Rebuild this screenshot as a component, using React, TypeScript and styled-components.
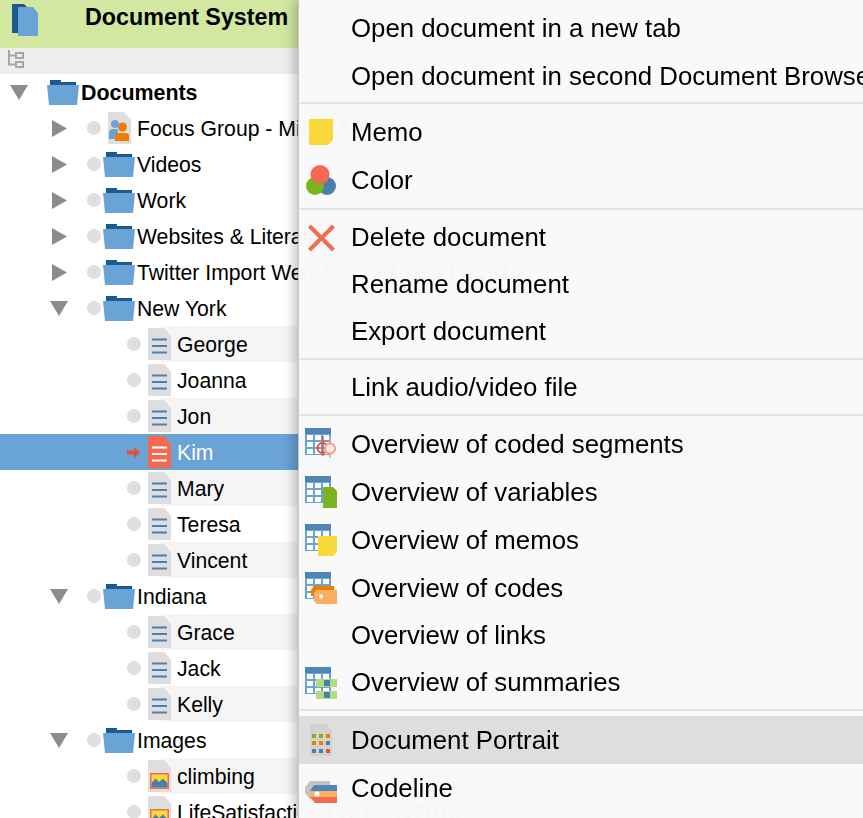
import React from 'react';
import styled, {createGlobalStyle} from 'styled-components';

const BLUE = '#6aa3d5';
const DARK_BLUE = '#1c5a8e';
const MID_BLUE = '#4a80b0';
const RED = '#f4694f';
const GREEN = '#7ab51d';
const YELLOW = '#fcd93a';
const ORANGE = '#f07d00';
const LIGHT_ORANGE = '#fbb061';
const DOC_GREY = '#dedede';

const GlobalStyle = createGlobalStyle`
    html, body {
        margin: 0;
        padding: 0;
        background: #fff;
    }
    body {
        font-family: "Liberation Sans", Arial, sans-serif;
        color: #000;
    }
`;

const Page = styled.div`
    position: relative;
    width: 863px;
    height: 818px;
    overflow: hidden;
    background: #fff;
`;

const Header = styled.div`
    display: flex;
    align-items: flex-start;
    height: 48px;
    width: 300px;
    padding: 4px 0 0 12px;
    box-sizing: border-box;
    background: #d2e8a0;
`;

const Title = styled.h1`
    margin: -5px 0 0 47px;
    font-size: 23.3px;
    line-height: 36px;
    font-weight: bold;
    white-space: nowrap;
`;

const Toolbar = styled.div`
    display: flex;
    align-items: flex-start;
    height: 26px;
    width: 300px;
    padding: 2px 0 0 8px;
    box-sizing: border-box;
    background: #eeeeee;
`;

const Tree = styled.div`
    display: flex;
    flex-direction: column;
`;

const Row = styled.div<{$depth: number; $shaded?: boolean; $selected?: boolean}>`
    display: flex;
    align-items: center;
    flex: none;
    height: 36px;
    padding-left: ${p => [10, 50, 127][p.$depth]}px;
    white-space: nowrap;
    color: ${p => (p.$selected ? '#fff' : '#000')};
    background: ${p =>
        p.$selected
            ? BLUE
            : p.$shaded
              ? 'linear-gradient(to right, transparent 161px, #f5f5f5 161px)'
              : 'transparent'};
`;

const Twisty = styled.div`
    flex: none;
    width: 37px;
    display: flex;
    align-items: center;
`;

const Dot = styled.span`
    flex: none;
    width: 14px;
    height: 14px;
    margin-right: 2px;
    border-radius: 50%;
    background: #e0e0e0;
`;

const ArrowSlot = styled.span`
    flex: none;
    display: flex;
    width: 14px;
    margin-right: 2px;
`;

const IconSlot = styled.span`
    flex: none;
    display: flex;
    justify-content: center;
    width: 32px;
    margin-right: 2px;
`;

const Label = styled.span<{$bold?: boolean}>`
    margin-top: 2px;
    font-size: ${p => (p.$bold ? 21.4 : 21.2)}px;
    line-height: 36px;
    font-weight: ${p => (p.$bold ? 'bold' : 'normal')};
`;

const Menu = styled.div`
    position: absolute;
    top: 0;
    left: 298px;
    right: 0;
    bottom: 0;
    padding-top: 4px;
    box-sizing: border-box;
    background: rgba(249, 249, 249, 0.98);
    backdrop-filter: blur(1px);
    border-left: 1px solid #c8c8c8;
    box-shadow: -3px 0 12px rgba(0, 0, 0, 0.28);
`;

const MenuItem = styled.div<{$compact?: boolean; $active?: boolean}>`
    display: flex;
    align-items: center;
    height: ${p => (p.$compact ? 47 : 48)}px;
    padding-left: 6px;
    white-space: nowrap;
    background: ${p => (p.$active ? '#dedede' : 'transparent')};
`;

const MenuIcon = styled.span`
    flex: none;
    display: flex;
    width: 32px;
    height: 32px;
    margin-right: 14px;
`;

const MenuText = styled.span`
    font-size: 25.8px;
`;

const Separator = styled.div<{$before: number; $after: number}>`
    height: 2px;
    margin: ${p => p.$before}px 0 ${p => p.$after}px;
    background: #e4e4e4;
`;

const HeaderIcon = () => (
    <svg width="26" height="32" viewBox="0 0 26 32">
        <path d="M0 0H12L15 3V29H0Z" fill={DARK_BLUE} />
        <path d="M6 3H21L26 9V32H6Z" fill={BLUE} />
    </svg>
);

const TreeToggleIcon = () => (
    <svg width="16" height="18" viewBox="0 0 16 18" fill="none" stroke="#a6a6a6" strokeWidth="2">
        <path d="M1 0V14.5H7M1 5.5H7" />
        <rect x="8" y="3" width="7" height="5" />
        <rect x="8" y="12" width="7" height="5" />
    </svg>
);

const TriangleDown = () => (
    <svg width="18" height="15" viewBox="0 0 18 15">
        <path d="M0 0H18L9 15Z" fill="#8c8c8c" />
    </svg>
);

const TriangleRight = () => (
    <svg width="18" height="17" viewBox="0 0 18 17">
        <path d="M2 0L17 8.5L2 17Z" fill="#8c8c8c" />
    </svg>
);

const RedArrow = () => (
    <svg width="13" height="11" viewBox="0 0 13 11">
        <path d="M0 3.5H7V0L13 5.5L7 11V7.5H0Z" fill="#e4512f" />
    </svg>
);

const Folder = () => (
    <svg width="32" height="25" viewBox="0 0 32 25">
        <path d="M3 6V0H14V2H29V6Z" fill={DARK_BLUE} />
        <path d="M0 5H32L30 25H2Z" fill={BLUE} />
    </svg>
);

const docShape = 'M0 0H16L23 8V32H0Z';

const TextDoc = ({selected}: {selected?: boolean}) => (
    <svg width="23" height="32" viewBox="0 0 23 32">
        <path d={docShape} fill={selected ? RED : DOC_GREY} />
        <path
            d="M4 11.5H19M4 18H19M4 24.5H19"
            stroke={selected ? '#fff' : MID_BLUE}
            strokeWidth="2"
        />
    </svg>
);

const ImageDoc = () => (
    <svg width="23" height="32" viewBox="0 0 23 32">
        <path d={docShape} fill={DOC_GREY} />
        <rect x="2.75" y="13.75" width="17.5" height="14.5" fill={YELLOW} stroke={RED} strokeWidth="1.5" />
        <path d="M3.5 27.5V23L7.5 18.5L11 22L15 18.5L19.5 23V27.5Z" fill={MID_BLUE} />
    </svg>
);

const PeopleDoc = () => (
    <svg width="23" height="32" viewBox="0 0 23 32">
        <path d={docShape} fill={DOC_GREY} />
        <circle cx="7" cy="12" r="4" fill={BLUE} />
        <path d="M1 27V21Q1 17 5 17H10V27Z" fill={BLUE} />
        <circle cx="14.5" cy="15" r="4.5" fill={ORANGE} />
        <path d="M7 29V24Q7 21 10 21H18Q21 21 21 24V29Z" fill={ORANGE} />
    </svg>
);

const TableBase = () => (
    <>
        <rect width="26" height="27" fill={BLUE} />
        <rect width="26" height="6" fill="#4f86b8" />
        {[2, 10, 18].flatMap(x =>
            [7, 14, 21].map(y => <rect key={`${x}-${y}`} x={x} y={y} width="6" height="5" fill="#fff" />),
        )}
    </>
);

const Glyph: React.FC<{children: React.ReactNode}> = ({children}) => (
    <svg width="32" height="32" viewBox="0 0 32 32">
        {children}
    </svg>
);

const portraitDots = [
    [GREEN, GREEN, ORANGE],
    [ORANGE, ORANGE, MID_BLUE],
    [MID_BLUE, MID_BLUE, '#e4512f'],
];

const icons: Record<string, React.ReactNode> = {
    memo: (
        <Glyph>
            <path d="M4 3H28V24L23 29H4Z" fill={YELLOW} />
        </Glyph>
    ),
    color: (
        <Glyph>
            <circle cx="22" cy="22" r="9" fill={MID_BLUE} />
            <circle cx="10" cy="22" r="9" fill={GREEN} />
            <circle cx="15" cy="10.5" r="9.5" fill={RED} />
        </Glyph>
    ),
    delete: (
        <Glyph>
            <path d="M4.5 4L28.5 28M28.5 4L4.5 28" stroke={RED} strokeWidth="4" />
        </Glyph>
    ),
    coded: (
        <Glyph>
            <TableBase />
            <path d="M18 8V28" stroke="#e5533d" strokeWidth="1.5" />
            <path d="M25 9V30" stroke="#f99a85" strokeWidth="1.5" />
            <circle cx="17.5" cy="20" r="5" fill="none" stroke="#e5533d" strokeWidth="2" />
            <circle cx="25" cy="20.5" r="5" fill="#fdeee9" stroke="#f99a85" strokeWidth="2" />
        </Glyph>
    ),
    variables: (
        <Glyph>
            <TableBase />
            <path d="M18 11H28L32 15V32H18Z" fill={GREEN} />
        </Glyph>
    ),
    memos: (
        <Glyph>
            <TableBase />
            <path d="M13 12H32V28L28 32H13Z" fill={YELLOW} />
        </Glyph>
    ),
    codes: (
        <Glyph>
            <TableBase />
            <path d="M9 14H29V24H6V18Z" fill={ORANGE} />
            <path d="M12 18H32V32H12L9 29V21Z" fill={LIGHT_ORANGE} />
            <circle cx="16" cy="24.5" r="2" fill="#fff" />
        </Glyph>
    ),
    summaries: (
        <Glyph>
            <TableBase />
            <rect x="11" y="12" width="21" height="8" fill="#b5db7f" />
            <rect x="11" y="24" width="21" height="8" fill="#b5db7f" />
            <rect x="19" y="13" width="6" height="6" fill={MID_BLUE} />
            <rect x="19" y="25" width="6" height="6" fill={MID_BLUE} />
        </Glyph>
    ),
    portrait: (
        <Glyph>
            <path d="M5 0H21L27 7V32H5Z" fill="#d2d2d2" />
            {portraitDots.flatMap((row, r) =>
                row.map((fill, c) => (
                    <rect key={`${r}-${c}`} x={7 + c * 7} y={[10, 17, 25][r]} width="4" height="4" fill={fill} />
                )),
            )}
        </Glyph>
    ),
    codeline: (
        <Glyph>
            <path d="M5 9H25V27H5L0 21V15Z" fill="#c4c4c4" />
            <path d="M9 13H32V19H5Z" fill="#4f86b8" />
            <path d="M5 19H32V25H5Z" fill={LIGHT_ORANGE} />
            <path d="M5 25H32V31H10Z" fill={RED} />
            <circle cx="12" cy="22" r="2.5" fill="#fff" />
        </Glyph>
    ),
};

type Node = {
    label: string;
    depth: number;
    kind: 'folder' | 'text' | 'image' | 'people';
    open?: boolean;
    bold?: boolean;
    shaded?: boolean;
    selected?: boolean;
};

const treeNodes: Node[] = [
    {label: 'Documents', depth: 0, kind: 'folder', open: true, bold: true},
    {label: 'Focus Group - Mixed Method', depth: 1, kind: 'people', open: false},
    {label: 'Videos', depth: 1, kind: 'folder', open: false},
    {label: 'Work', depth: 1, kind: 'folder', open: false},
    {label: 'Websites & Literature', depth: 1, kind: 'folder', open: false},
    {label: 'Twitter Import Wed Apr 29 10:00:19 2015', depth: 1, kind: 'folder', open: false},
    {label: 'New York', depth: 1, kind: 'folder', open: true},
    {label: 'George', depth: 2, kind: 'text', shaded: true},
    {label: 'Joanna', depth: 2, kind: 'text'},
    {label: 'Jon', depth: 2, kind: 'text', shaded: true},
    {label: 'Kim', depth: 2, kind: 'text', selected: true},
    {label: 'Mary', depth: 2, kind: 'text', shaded: true},
    {label: 'Teresa', depth: 2, kind: 'text'},
    {label: 'Vincent', depth: 2, kind: 'text', shaded: true},
    {label: 'Indiana', depth: 1, kind: 'folder', open: true},
    {label: 'Grace', depth: 2, kind: 'text', shaded: true},
    {label: 'Jack', depth: 2, kind: 'text'},
    {label: 'Kelly', depth: 2, kind: 'text', shaded: true},
    {label: 'Images', depth: 1, kind: 'folder', open: true},
    {label: 'climbing', depth: 2, kind: 'image', shaded: true},
    {label: 'LifeSatisfaction FU 1973/2010', depth: 2, kind: 'image'},
];

const nodeIcon = (node: Node) => {
    if (node.kind === 'folder') return <Folder />;
    if (node.kind === 'people') return <PeopleDoc />;
    if (node.kind === 'image') return <ImageDoc />;
    return <TextDoc selected={node.selected} />;
};

const TreeRow = ({node}: {node: Node}) => (
    <Row $depth={node.depth} $shaded={node.shaded} $selected={node.selected}>
        {node.depth < 2 && <Twisty>{node.open ? <TriangleDown /> : <TriangleRight />}</Twisty>}
        {node.selected ? (
            <ArrowSlot>
                <RedArrow />
            </ArrowSlot>
        ) : (
            node.depth > 0 && <Dot />
        )}
        <IconSlot>{nodeIcon(node)}</IconSlot>
        <Label $bold={node.bold}>{node.label}</Label>
    </Row>
);

const Item = ({
    label,
    icon,
    compact,
    active,
}: {
    label: string;
    icon?: string;
    compact?: boolean;
    active?: boolean;
}) => (
    <MenuItem $compact={compact} $active={active}>
        <MenuIcon>{icon && icons[icon]}</MenuIcon>
        <MenuText>{label}</MenuText>
    </MenuItem>
);

export default function App() {
    return (
        <Page>
            <GlobalStyle />
            <Header>
                <HeaderIcon />
                <Title>Document System</Title>
            </Header>
            <Toolbar>
                <TreeToggleIcon />
            </Toolbar>
            <Tree>
                {treeNodes.map(node => (
                    <TreeRow key={node.label} node={node} />
                ))}
            </Tree>
            <Menu>
                <Item label="Open document in a new tab" />
                <Item label="Open document in second Document Browser" />
                <Separator $before={2} $after={4} />
                <Item label="Memo" icon="memo" />
                <Item label="Color" icon="color" />
                <Separator $before={4} $after={4} />
                <Item label="Delete document" icon="delete" compact />
                <Item label="Rename document" compact />
                <Item label="Export document" compact />
                <Separator $before={3} $after={3} />
                <Item label="Link audio/video file" />
                <Separator $before={3} $after={4} />
                <Item label="Overview of coded segments" icon="coded" />
                <Item label="Overview of variables" icon="variables" />
                <Item label="Overview of memos" icon="memos" />
                <Item label="Overview of codes" icon="codes" />
                <Item label="Overview of links" compact />
                <Item label="Overview of summaries" icon="summaries" compact />
                <Separator $before={3} $after={5} />
                <Item label="Document Portrait" icon="portrait" active />
                <Item label="Codeline" icon="codeline" />
            </Menu>
        </Page>
    );
}
